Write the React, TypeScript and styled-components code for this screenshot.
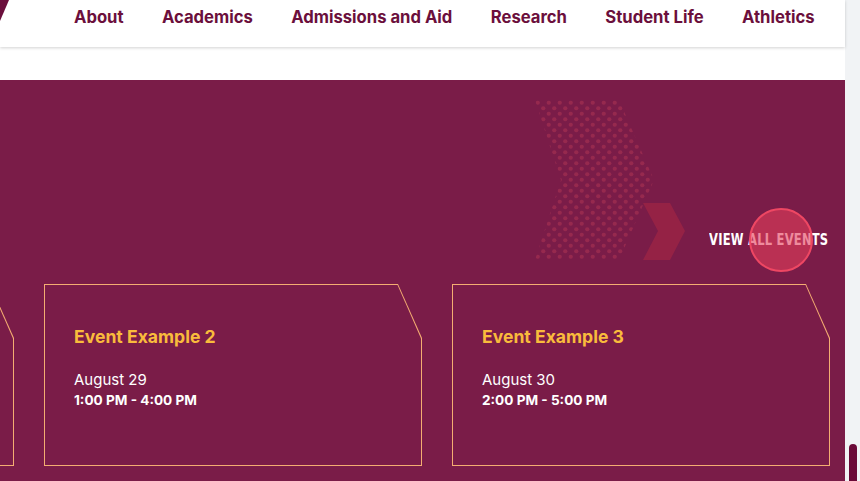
import React from "react";
import styled, { createGlobalStyle } from "styled-components";

interface EventItem {
  title: string;
  date: string;
  time: string;
}

const events: EventItem[] = [
  { title: "Event Example 1", date: "August 28", time: "12:00 PM - 3:00 PM" },
  { title: "Event Example 2", date: "August 29", time: "1:00 PM - 4:00 PM" },
  { title: "Event Example 3", date: "August 30", time: "2:00 PM - 5:00 PM" },
];

const navLinks = ["About", "Academics", "Admissions and Aid", "Research", "Student Life", "Athletics"];

const GlobalStyle = createGlobalStyle`
  html, body {
    margin: 0;
    padding: 0;
    overflow: hidden;
    background: #ffffff;
  }
  * { box-sizing: border-box; }
`;

const App: React.FC = () => {
  return (
    <>
      <GlobalStyle />
      <Viewport>
        <Page>
          <Header>
            <Logo width="10" height="24" viewBox="0 0 10 24">
              <polygon points="0,0 9,0 0,21" fill="#6b0f3c" />
            </Logo>
            <Nav>
              {navLinks.map((link) => (
                <NavLink key={link}>{link}</NavLink>
              ))}
            </Nav>
          </Header>
          <Spacer />
          <EventsSection>
            <SectionHead>
              <Decoration width="150" height="160" viewBox="0 0 150 160">
                <defs>
                  <pattern id="dots" width="11" height="11" patternUnits="userSpaceOnUse">
                    <circle cx="2.75" cy="2.75" r="2.1" fill="#ad3353" />
                    <circle cx="8.25" cy="8.25" r="2.1" fill="#ad3353" />
                  </pattern>
                </defs>
                <polygon
                  points="0,0 84,0 119,80 84,160 0,160 26,80"
                  fill="url(#dots)"
                  opacity="0.55"
                />
                <polygon points="108,103 135,103 150,131 135,160 108,160 123,131" fill="#952245" />
              </Decoration>
              <ViewAll>
                <ViewAllText>VIEW ALL EVENTS</ViewAllText>
                <Highlight />
              </ViewAll>
            </SectionHead>
            <Track>
              {events.map((ev) => (
                <Card key={ev.title}>
                  <CardTitle>{ev.title}</CardTitle>
                  <CardDate>{ev.date}</CardDate>
                  <CardTime>{ev.time}</CardTime>
                </Card>
              ))}
            </Track>
          </EventsSection>
        </Page>
        <ScrollTrack>
          <ScrollThumb />
        </ScrollTrack>
      </Viewport>
    </>
  );
};

export default App;

const Viewport = styled.div`
  display: flex;
  width: 860px;
  height: 481px;
  overflow: hidden;
`;

const Page = styled.div`
  width: 845px;
  flex-shrink: 0;
  display: flex;
  flex-direction: column;
  background: #ffffff;
`;

const Header = styled.header`
  height: 47px;
  display: flex;
  align-items: flex-start;
  background: #ffffff;
  box-shadow: 0 1px 3px rgba(0, 0, 0, 0.18);
  position: relative;
  z-index: 2;
`;

const Logo = styled.svg`
  display: block;
  flex-shrink: 0;
`;

const Nav = styled.nav`
  display: flex;
  gap: 38.4px;
  padding: 6px 0 0 64px;
`;

const NavLink = styled.a`
  font-family: Inter, "Noto Sans", sans-serif;
  font-weight: 700;
  font-size: 16.65px;
  line-height: 22px;
  color: #6b0f3c;
  white-space: nowrap;
  cursor: pointer;
`;

const Spacer = styled.div`
  height: 33px;
`;

const EventsSection = styled.section`
  flex: 1;
  background: #7a1c48;
  padding: 0 16px 0 0;
  overflow: hidden;
`;

const SectionHead = styled.div`
  height: 204px;
  display: flex;
  justify-content: flex-end;
  align-items: flex-end;
  gap: 24px;
`;

const Decoration = styled.svg`
  display: block;
  margin-bottom: 24px;
`;

const ViewAll = styled.a`
  position: relative;
  display: block;
  width: 120px;
  margin-bottom: 35px;
  cursor: pointer;
`;

const ViewAllText = styled.span`
  display: inline-block;
  font-family: "DejaVu Sans Condensed", "DejaVu Sans", sans-serif;
  font-weight: 700;
  font-size: 16px;
  line-height: 17px;
  letter-spacing: 0.3px;
  color: #ffffff;
  white-space: nowrap;
  transform: scaleX(0.8);
  transform-origin: left center;
`;

const Highlight = styled.span`
  position: absolute;
  left: 40px;
  top: -23px;
  width: 64px;
  height: 64px;
  border-radius: 50%;
  border: 2px solid #ee4763;
  background: rgba(228, 62, 92, 0.6);
  pointer-events: none;
`;

const Track = styled.div`
  display: flex;
  gap: 30px;
  margin-left: -364px;
`;

const cardShape = "polygon(0 0, calc(100% - 24px) 0, 100% 54px, 100% 100%, 0 100%)";

const Card = styled.article`
  position: relative;
  flex-shrink: 0;
  width: 378px;
  height: 182px;
  padding: 42px 30px 0;
  background: #f4ad72;
  clip-path: ${cardShape};
  display: flex;
  flex-direction: column;

  &::before {
    content: "";
    position: absolute;
    inset: 1px;
    background: #7a1c48;
    clip-path: polygon(0 0, calc(100% - 23.5px) 0, 100% 53.5px, 100% 100%, 0 100%);
  }

  & > * {
    position: relative;
  }
`;

const CardTitle = styled.h3`
  margin: 0 0 22px;
  font-family: Inter, "Noto Sans", sans-serif;
  font-weight: 700;
  font-size: 17.6px;
  line-height: 22px;
  color: #f9bb3c;
`;

const CardDate = styled.div`
  font-family: Inter, "Noto Sans", sans-serif;
  font-size: 15px;
  line-height: 20px;
  color: #ffffff;
`;

const CardTime = styled.div`
  font-family: Inter, "Noto Sans", sans-serif;
  font-weight: 700;
  font-size: 13.6px;
  line-height: 20px;
  color: #ffffff;
`;

const ScrollTrack = styled.div`
  width: 15px;
  flex-shrink: 0;
  background: #f1f3f5;
  display: flex;
  flex-direction: column;
  justify-content: flex-end;
  align-items: center;
`;

const ScrollThumb = styled.div`
  width: 8px;
  height: 37px;
  border-radius: 4px 4px 0 0;
  background: #6b0a38;
`;
